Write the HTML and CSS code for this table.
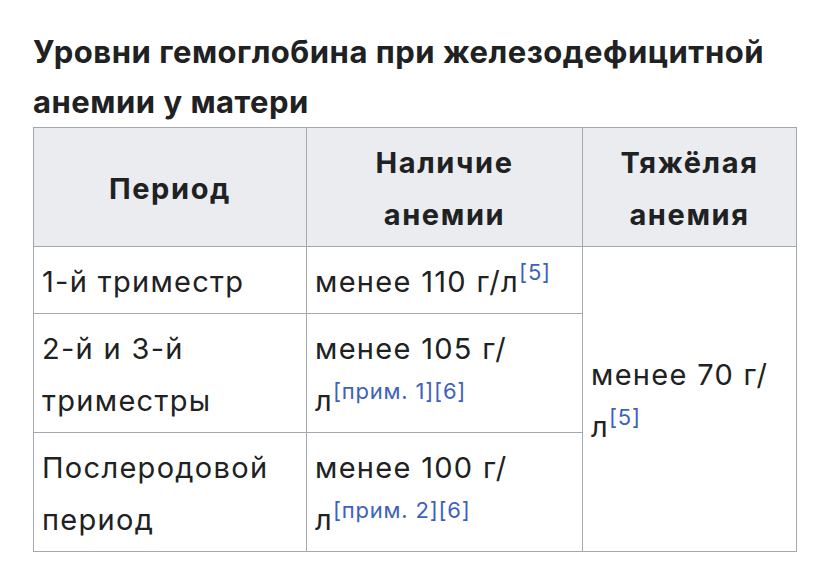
FILE: index.html
```html
<!DOCTYPE html>
<html lang="ru">
<head>
<meta charset="utf-8">
<title>Уровни гемоглобина</title>
<link rel="stylesheet" href="styles.css">
</head>
<body>
<table class="wikitable">
  <caption class="caption">Уровни гемоглобина при железодефицитной анемии у матери</caption>
  <colgroup>
    <col class="col-period">
    <col class="col-any">
    <col class="col-severe">
  </colgroup>
  <thead>
    <tr>
      <th>Период</th>
      <th>Наличие анемии</th>
      <th>Тяжёлая анемия</th>
    </tr>
  </thead>
  <tbody>
    <tr>
      <td>1-й триместр</td>
      <td>менее 110 г/л<sup class="ref">[5]</sup></td>
      <td rowspan="3" class="mid">менее 70 г/<wbr>л<sup class="ref">[5]</sup></td>
    </tr>
    <tr>
      <td>2-й и 3-й триместры</td>
      <td>менее 105 г/<wbr>л<sup class="ref">[прим. 1][6]</sup></td>
    </tr>
    <tr>
      <td>Послеродовой период</td>
      <td>менее 100 г/<wbr>л<sup class="ref">[прим. 2][6]</sup></td>
    </tr>
  </tbody>
</table>
</body>
</html>
```

FILE: styles.css
```css
html, body {
  margin: 0;
  padding: 0;
  background: #ffffff;
}
body {
  padding: 27px 0 0 33px;
  font-family: "Inter", "Liberation Sans", sans-serif;
  color: #202122;
}
.wikitable {
  border-collapse: collapse;
  table-layout: fixed;
  width: 763px;
  font-size: 29px;
  line-height: 52px;
  letter-spacing: 1.3px;
}
.col-period { width: 273px; }
.col-any { width: 276px; }
.col-severe { width: 214px; }
.caption {
  caption-side: top;
  text-align: left;
  font-weight: 700;
  font-size: 31px;
  line-height: 50px;
  letter-spacing: 0.5px;
  padding: 0;
}
.wikitable th,
.wikitable td {
  border: 1px solid #a2a9b1;
  padding: 9px 8px 5px;
  vertical-align: middle;
}
.wikitable th {
  background: #eaecf0;
  font-weight: 700;
  text-align: center;
  letter-spacing: 1.6px;
}
.wikitable td {
  text-align: left;
}
.ref {
  font-size: 22px;
  line-height: 1;
  letter-spacing: 0.8px;
  white-space: nowrap;
  vertical-align: 12px;
  color: #3d62b8;
}
```
